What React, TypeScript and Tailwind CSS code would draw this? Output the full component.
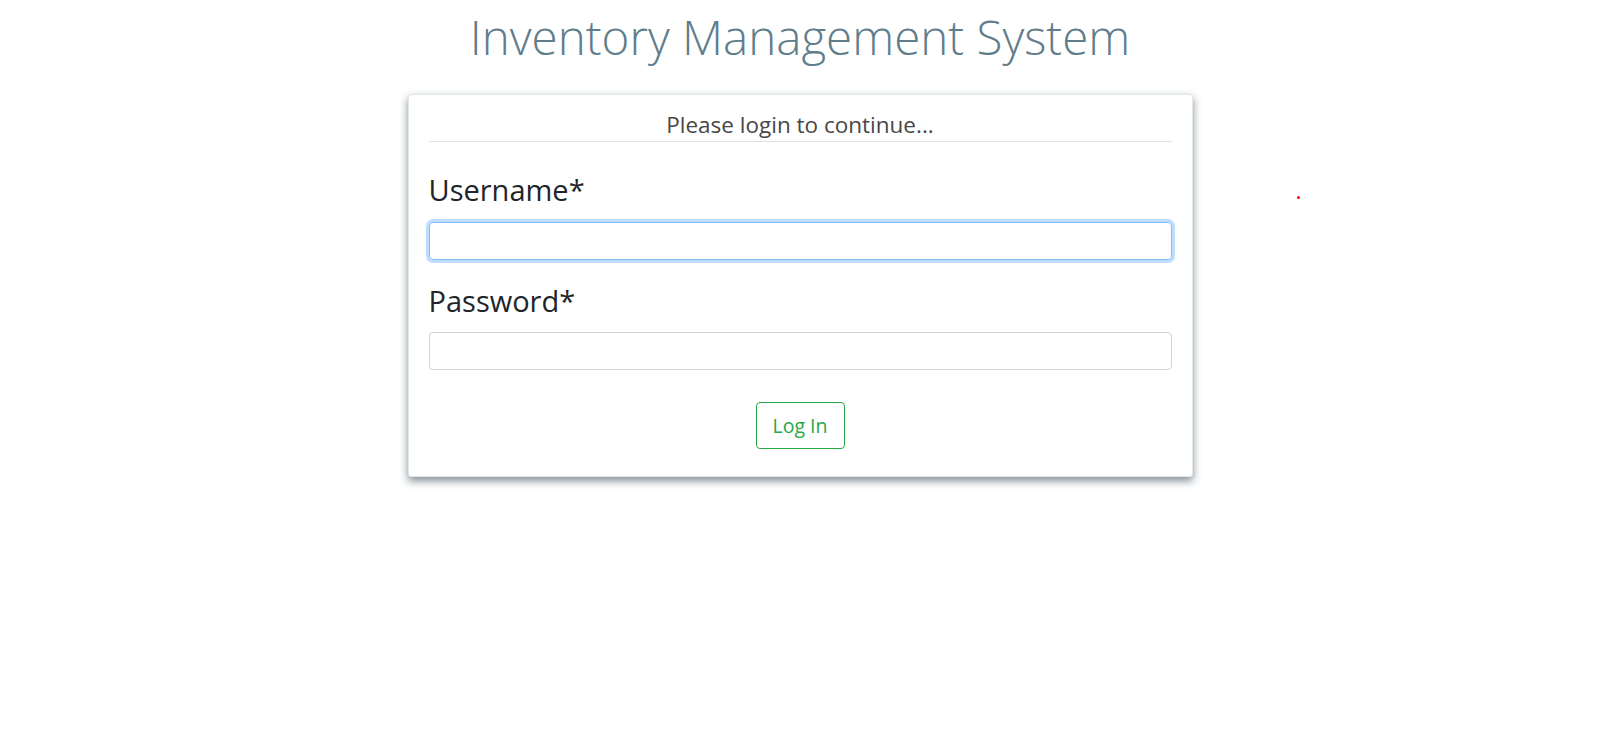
import React from "react";

export default function App() {
  return (
    <div className="relative min-h-[736px] w-full bg-white" style={{ fontFamily: '"Open Sans", "Noto Sans", sans-serif' }}>
      <h1 className="pt-[7px] text-center text-[47.5px] font-light leading-[60px] text-[#607d8b]">
        Inventory Management System
      </h1>
      <div className="mx-auto mt-[27px] w-[785px] rounded-[3px] border border-[#e3e6e8] bg-white px-[20px] pb-[27px] pt-[14px] shadow-[0_4px_8px_rgba(60,80,90,0.65)]">
        <div className="border-b border-[#dee2e6] text-center text-[22.5px] leading-[32px] text-[#474747]">
          Please login to continue...
        </div>
        <div className="mt-[28px]">
          <label className="block text-[29px] leading-[40px] text-[#212529]">Username*</label>
          <input
            type="text"
            className="mt-[12px] block h-[38px] w-full rounded-[4px] border border-[#80bdff] px-3 shadow-[0_0_0_3px_rgba(0,123,255,0.25)] outline-none"
          />
        </div>
        <div className="mt-[21px]">
          <label className="block text-[29px] leading-[40px] text-[#212529]">Password*</label>
          <input
            type="password"
            className="mt-[11px] block h-[38px] w-full rounded-[4px] border border-[#ced4da] px-3 outline-none"
          />
        </div>
        <div className="mt-[32px] flex justify-center">
          <button className="h-[47px] w-[89px] rounded-[4px] border border-[#28a745] bg-white text-[19.5px] text-[#28a745]">
            Log In
          </button>
        </div>
      </div>
      <div className="absolute left-[1297px] top-[196px] h-[3px] w-[3px] rounded-full bg-[#ff0000]" />
    </div>
  );
}
